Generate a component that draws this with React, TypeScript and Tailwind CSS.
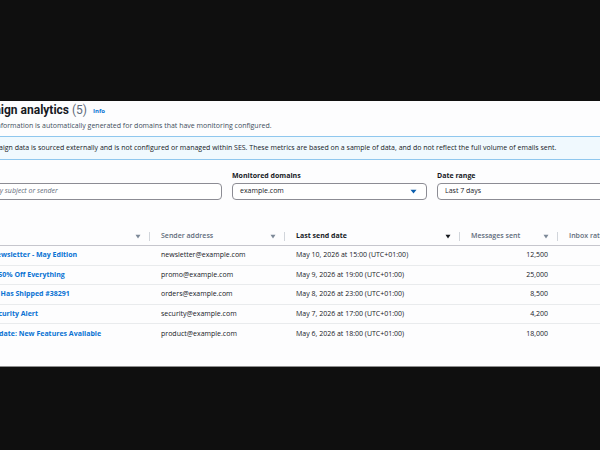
import React from 'react';

const rows = [
  { subject: 'Monthly Newsletter - May Edition', sender: 'newsletter@example.com', date: 'May 10, 2026 at 15:00 (UTC+01:00)', sent: '12,500' },
  { subject: 'Flash Sale: 50% Off Everything', sender: 'promo@example.com', date: 'May 9, 2026 at 19:00 (UTC+01:00)', sent: '25,000' },
  { subject: 'Your Order Has Shipped #38291', sender: 'orders@example.com', date: 'May 8, 2026 at 23:00 (UTC+01:00)', sent: '8,500' },
  { subject: 'Account Security Alert', sender: 'security@example.com', date: 'May 7, 2026 at 17:00 (UTC+01:00)', sent: '4,200' },
  { subject: 'Product Update: New Features Available', sender: 'product@example.com', date: 'May 6, 2026 at 18:00 (UTC+01:00)', sent: '18,000' },
];

const SortIcon = ({ active }: { active?: boolean }) => (
  <svg width="6" height="5" viewBox="0 0 6 5" className="shrink-0">
    <path d="M0.5 0.8 L5.5 0.8 L3 4.4 Z" fill={active ? '#16191f' : '#7d8998'} />
  </svg>
);

const HeaderCell = ({ label, width, active, divider = true }: any) => (
  <div className={`${width} h-full flex items-center shrink-0`}>
    <div className="flex-1 flex items-center justify-between pl-[11px] pr-[8px]">
      <span className={active ? 'font-bold text-[#16191f]' : 'font-semibold text-[#5f6b7a]'}>{label}</span>
      {label !== 'Inbox rate' && <SortIcon active={active} />}
    </div>
    {divider && <div className="w-px h-[9px] bg-[#d1d5db]" />}
  </div>
);

export default function App() {
  return (
    <div
      className="w-[600px] h-[450px] bg-[#0f0f0f] overflow-hidden"
      style={{ fontFamily: '"Open Sans", "Liberation Sans", sans-serif' }}
    >
      <div className="mt-[101px] h-[266px] bg-[#fdfdfe] border-b border-[#8f8f8f] overflow-hidden">
        <div className="-ml-[51px] w-[720px] text-[7px] text-[#16191f]">
          {/* Heading */}
          <div className="pl-[14px] pt-[1px] h-[17px] flex items-center gap-[6px]">
            <h1 className="text-[12px] leading-[14px] font-bold text-[#16191f] font-[Roboto,sans-serif]">
              Campaign analytics <span className="font-normal text-[#5f6b7a]">(5)</span>
            </h1>
            <span className="text-[6px] font-bold text-[#0972d3] mt-[2px]">Info</span>
          </div>
          <p className="pl-[11px] mt-[3px] h-[10px] leading-[10px] text-[#414d5c]">
            Campaign information is automatically generated for domains that have monitoring configured.
          </p>

          {/* Alert */}
          <div className="ml-[11px] mt-[5px] h-[24px] border border-[#8fc7ee] bg-[#f0f9fe] flex items-center gap-[4px] pl-[5px]">
            <svg width="10" height="10" viewBox="0 0 10 10">
              <circle cx="5" cy="5" r="4.2" fill="none" stroke="#0972d3" strokeWidth="1.2" />
              <path d="M5 4.3 V7.2 M5 2.6 V3.3" stroke="#0972d3" strokeWidth="1.2" />
            </svg>
            <span className="text-[#16191f]">
              Campaign data is sourced externally and is not configured or managed within SES. These metrics are based on a sample of data, and do not reflect the full volume of emails sent.
            </span>
          </div>

          {/* Filters */}
          <div className="ml-[11px] mt-[11px] flex gap-[10px]">
            <div className="w-[262px] flex flex-col justify-end">
              <div className="h-[17px] border border-[#8c8c94] rounded-[4px] bg-white flex items-center pl-[12px] italic text-[#5f6b7a]">
                Search by subject or sender
              </div>
            </div>
            <div className="w-[195px] flex flex-col gap-[2px]">
              <span className="font-bold h-[10px] leading-[10px]">Monitored domains</span>
              <div className="h-[17px] border border-[#8c8c94] rounded-[4px] bg-white flex items-center justify-between pl-[7px] pr-[9px]">
                <span>example.com</span>
                <svg width="7" height="5" viewBox="0 0 7 5">
                  <path d="M0.5 0.8 L6.5 0.8 L3.5 4.5 Z" fill="#0b5ead" />
                </svg>
              </div>
            </div>
            <div className="w-[195px] flex flex-col gap-[2px]">
              <span className="font-bold h-[10px] leading-[10px]">Date range</span>
              <div className="h-[17px] border border-[#8c8c94] rounded-[4px] bg-white flex items-center justify-between pl-[7px] pr-[9px]">
                <span>Last 7 days</span>
                <svg width="7" height="5" viewBox="0 0 7 5">
                  <path d="M0.5 0.8 L6.5 0.8 L3.5 4.5 Z" fill="#0b5ead" />
                </svg>
              </div>
            </div>
          </div>

          {/* Table */}
          <div className="mt-[27px]">
            <div className="h-[19px] flex border-b border-[#c6c6cd]">
              <HeaderCell label="Subject" width="w-[201px]" />
              <HeaderCell label="Sender address" width="w-[135px]" />
              <HeaderCell label="Last send date" width="w-[175px]" active />
              <HeaderCell label="Messages sent" width="w-[98px]" />
              <HeaderCell label="Inbox rate" width="w-[110px]" divider={false} />
            </div>
            {rows.map((r, i) => (
              <div
                key={r.sender}
                className={`h-[19.5px] flex items-center ${i < rows.length - 1 ? 'border-b border-[#e9ebed]' : ''}`}
              >
                <div className="w-[201px] pl-[11px] shrink-0 font-bold text-[#0972d3] truncate">{r.subject}</div>
                <div className="w-[135px] pl-[11px] shrink-0">{r.sender}</div>
                <div className="w-[175px] pl-[11px] shrink-0">{r.date}</div>
                <div className="w-[98px] pr-[10px] shrink-0 text-right">{r.sent}</div>
                <div className="w-[110px] shrink-0" />
              </div>
            ))}
          </div>
        </div>
      </div>
    </div>
  );
}
